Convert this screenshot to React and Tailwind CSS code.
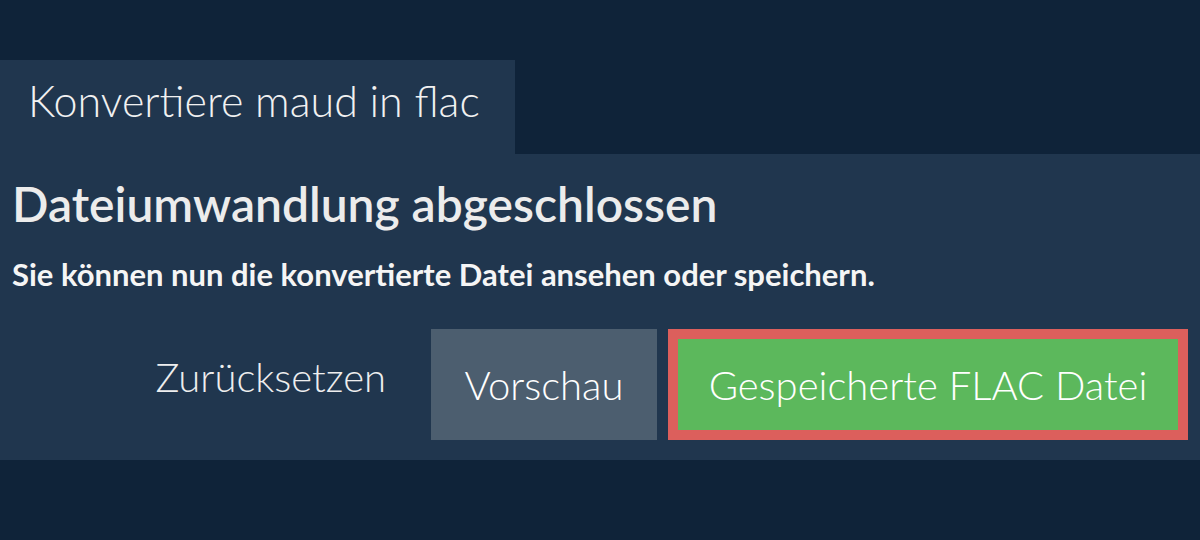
import React from 'react';

const App = () => {
  return (
    <div className="w-[1200px] h-[540px] bg-[#0f2339] pt-[60px] font-['Lato',sans-serif] overflow-hidden">
      <div className="flex">
        <div className="w-[515px] h-[94px] bg-[#20364e] pl-[28px] pt-[19px]">
          <h1 className="text-[43px] font-light text-[#f1f1f1] leading-none">Konvertiere maud in flac</h1>
        </div>
      </div>
      <div className="bg-[#20364e] h-[306px] px-[12px] pt-[26px]">
        <h2 className="text-[48px] font-semibold text-[#ececec] leading-none">Dateiumwandlung abgeschlossen</h2>
        <p className="mt-[31px] text-[31px] font-bold text-[#f5f5f5] leading-none">
          Sie können nun die konvertierte Datei ansehen oder speichern.
        </p>
        <div className="mt-[39px] flex justify-end gap-[11px]">
          <button className="h-[111px] px-[34px] text-[40px] font-light text-[#eeeeee] pb-[16px]">Zurücksetzen</button>
          <button className="h-[111px] w-[226px] bg-[#4c5e6f] text-[40px] font-light text-white">Vorschau</button>
          <button className="h-[111px] w-[520px] border-[10px] border-[#dc5f5c] bg-[#5cb85c] text-[40px] font-light text-white">
            Gespeicherte FLAC Datei
          </button>
        </div>
      </div>
    </div>
  );
};

export default App;
